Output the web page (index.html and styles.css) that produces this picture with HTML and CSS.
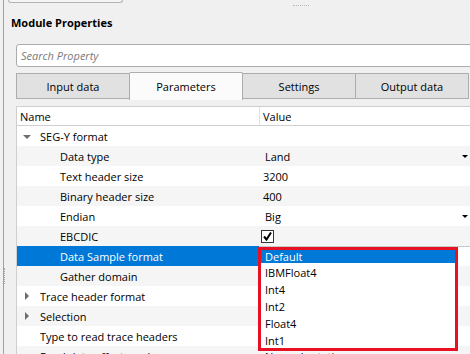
FILE: index.html
```html
<!DOCTYPE html>
<html lang="en">
  <head>
    <meta charset="UTF-8" />
    <title>Module Properties</title>
    <link rel="stylesheet" href="styles.css">
  </head>
  <body>
    <div class="panel">
      <div class="top-bar">
        <div class="top-stub"></div>
        <div class="grip-h"></div>
      </div>
      <div class="grip-v"></div>
      <h1 class="title">Module Properties</h1>
      <div class="search">
        <input type="text" placeholder="Search Property" />
      </div>

      <!-- TABS -->
      <div class="tabs">
        <div class="tab">Input data</div>
        <div class="tab active">Parameters</div>
        <div class="tab">Settings</div>
        <div class="tab">Output data</div>
      </div>

      <!-- PROPERTY TREE -->
      <div class="tree">
        <div class="row head">
          <div class="cell name">Name</div>
          <div class="cell value">Value</div>
        </div>
        <div class="row">
          <div class="cell name lvl0"><span class="arrow down"></span>SEG-Y format</div>
          <div class="cell value"></div>
        </div>
        <div class="row alt">
          <div class="cell name lvl1">Data type</div>
          <div class="cell value combo">Land<span class="caret"></span></div>
        </div>
        <div class="row">
          <div class="cell name lvl1">Text header size</div>
          <div class="cell value">3200</div>
        </div>
        <div class="row alt">
          <div class="cell name lvl1">Binary header size</div>
          <div class="cell value">400</div>
        </div>
        <div class="row">
          <div class="cell name lvl1">Endian</div>
          <div class="cell value combo">Big<span class="caret"></span></div>
        </div>
        <div class="row alt">
          <div class="cell name lvl1">EBCDIC</div>
          <div class="cell value">
            <span class="check">
              <svg width="11" height="11" viewBox="0 0 11 11">
                <path d="M2 5.5l2.5 3L9 1.5" fill="none" stroke="#000" stroke-width="2" />
              </svg>
            </span>
          </div>
        </div>
        <div class="row selected">
          <div class="cell name lvl1">Data Sample format</div>
          <div class="cell value editing"></div>
        </div>
        <div class="row alt">
          <div class="cell name lvl1">Gather domain</div>
          <div class="cell value"></div>
        </div>
        <div class="row">
          <div class="cell name lvl0"><span class="arrow right"></span>Trace header format</div>
          <div class="cell value"></div>
        </div>
        <div class="row alt">
          <div class="cell name lvl0"><span class="arrow right"></span>Selection</div>
          <div class="cell value"></div>
        </div>
        <div class="row">
          <div class="cell name lvl0">Type to read trace headers</div>
          <div class="cell value"></div>
        </div>
        <div class="row alt">
          <div class="cell name lvl0">Read data offset mode</div>
          <div class="cell value combo">Normal rotation<span class="caret"></span></div>
        </div>

        <!-- open combo popup -->
        <ul class="popup">
          <li class="current">Default</li>
          <li>IBMFloat4</li>
          <li>Int4</li>
          <li>Int2</li>
          <li>Float4</li>
          <li>Int1</li>
        </ul>
      </div>
    </div>
  </body>
</html>
```

FILE: styles.css
```css
* {
  margin: 0;
  padding: 0;
  box-sizing: border-box;
}

body {
  width: 470px;
  height: 354px;
  overflow: hidden;
  background: #f0f0f0;
  font-family: "Open Sans", "Noto Sans", sans-serif;
  font-size: 11px;
  color: #000;
}

/* PANEL with splitter line on the left */
.panel {
  position: relative;
  margin-left: 3px;
  height: 354px;
  border-left: 1px solid #a0a0a0;
  overflow: hidden;
}

.top-bar {
  display: flex;
  align-items: flex-start;
  height: 3px;
}
.top-stub {
  margin-left: 4px;
  width: 115px;
  height: 3px;
  border: 1px solid #b4b4b4;
  border-top: none;
  border-radius: 0 0 3px 3px;
  background: #f4f4f4;
}
/* splitter grips */
.grip-h {
  margin: 5px 0 0 170px;
  width: 16px;
  height: 1px;
  border-top: 1px dotted #b8b8b8;
}
.grip-v {
  position: absolute;
  left: 0;
  top: 268px;
  width: 1px;
  height: 16px;
  border-left: 1px dotted #a8a8a8;
}

.title {
  font-size: 11px;
  font-weight: 700;
  margin: 11px 0 0 7px;
  height: 18px;
  line-height: 18px;
}

/* SEARCH */
.search {
  margin: 12px 0 0 12px;
  width: 470px;
}
.search input {
  width: 100%;
  height: 23px;
  border: 1px solid #acacac;
  border-radius: 3px;
  padding: 0 4px;
  font-family: inherit;
  font-size: 11px;
  background: #fff;
  outline: none;
}
.search input::placeholder {
  color: #7a7a7a;
  font-style: italic;
}

/* TABS */
.tabs {
  display: flex;
  align-items: flex-end;
  margin: 5px 0 0 12px;
  height: 28px;
}
.tab {
  width: 114px;
  height: 26px;
  margin-bottom: 1px;
  border: 1px solid #adadad;
  background: #e1e1e1;
  display: flex;
  align-items: center;
  justify-content: center;
}
.tab + .tab {
  margin-left: -1px;
}
.tab.active {
  height: 28px;
  margin-bottom: 0;
  background: #fbfbfb;
  border-bottom: none;
  border-radius: 2px 2px 0 0;
  position: relative;
  z-index: 1;
}

/* TREE */
.tree {
  position: relative;
  margin: 6px 0 0 12px;
  border-top: 1px solid #cfcfcf;
  border-left: 1px solid #cfcfcf;
  background: #fff;
}
.row {
  display: grid;
  grid-template-columns: 242px 1fr;
  height: 20px;
  background: #fff;
}
.row.alt {
  background: #f5f5f5;
}
.row.head {
  height: 19px;
  border-bottom: 1px solid #d0d0d0;
}
.row.head .value {
  border-left: 1px solid #e2e2e2;
  padding-left: 3px;
}
.cell {
  display: flex;
  align-items: center;
  white-space: nowrap;
  overflow: hidden;
}
.head .name {
  padding-left: 3px;
}
.name.lvl0 {
  padding-left: 23px;
  position: relative;
}
.name.lvl1 {
  padding-left: 43px;
}
.value {
  padding-left: 4px;
  position: relative;
}
.value.combo {
  padding-left: 6px;
}
.row.selected {
  background: #0078d7;
  color: #fff;
}
.row.selected .value {
  background: #fff;
  border-top: 1px solid #c8c8c8;
}

.arrow {
  position: absolute;
  width: 0;
  height: 0;
}
.arrow.down {
  left: 6px;
  top: 9px;
  border-left: 4px solid transparent;
  border-right: 4px solid transparent;
  border-top: 4px solid #6d6d6d;
}
.arrow.right {
  left: 8px;
  top: 6px;
  border-top: 4px solid transparent;
  border-bottom: 4px solid transparent;
  border-left: 4px solid #6d6d6d;
}

.caret {
  position: absolute;
  right: 2px;
  top: 9px;
  border-left: 3px solid transparent;
  border-right: 3px solid transparent;
  border-top: 3px solid #000;
}

.check {
  display: flex;
  align-items: center;
  justify-content: center;
  width: 13px;
  height: 13px;
  border: 1px solid #333;
  background: #fff;
  margin-left: -2px;
}

/* POPUP LIST of the open combo */
.popup {
  position: absolute;
  left: 241px;
  top: 140px;
  width: 200px;
  height: 104px;
  list-style: none;
  background: #fff;
  border: 3px solid #e81123;
}
.popup li {
  height: 17px;
  line-height: 17px;
  padding-left: 4px;
}
.popup li.current {
  height: 14px;
  line-height: 13px;
  background: linear-gradient(#0078d7, #0078d7) top left / 100% 13px no-repeat;
  color: #fff;
}
```
